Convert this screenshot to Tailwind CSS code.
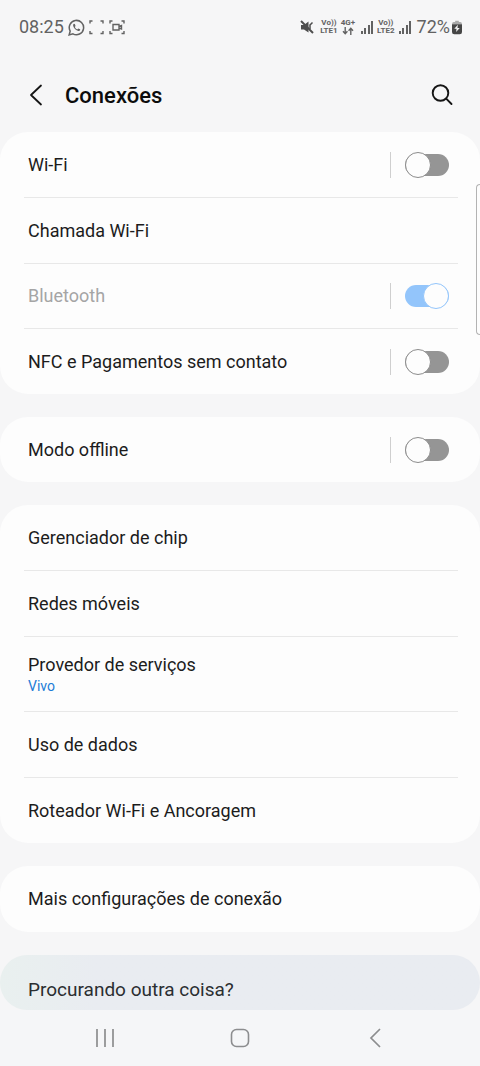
<!DOCTYPE html>
<html lang="pt-BR">
<head>
<meta charset="utf-8">
<meta name="viewport" content="width=device-width, initial-scale=1">
<title>Conexões</title>
<script src="https://cdn.jsdelivr.net/npm/@tailwindcss/browser@4"></script>
</head>
<body class="relative flex h-screen flex-col overflow-hidden bg-[#f6f6f7] font-[Roboto,sans-serif] text-lg text-[#1c1c1c]">

<!-- Status bar -->
<div class="flex h-[54px] shrink-0 items-center justify-between pr-[18px] pl-[19px] text-[#626262]">
  <div class="flex items-center gap-1">
    <span>08:25</span>
    <svg class="size-[17px]" viewBox="0 0 18 18" fill="none" stroke="currentColor" stroke-width="1.6" aria-label="WhatsApp"><path d="M1.2 16.8 2.3 12.8A7.6 7.6 0 1 1 5.2 15.7Z"/><path d="M6.3 5.1c-.9.5-1.1 1.4-.7 2.5.8 2.2 2.4 3.9 4.7 4.8 1.2.5 2.1.2 2.6-.8l-.1-.7-1.9-.9-1.2 1c-1.1-.5-2-1.4-2.5-2.5l.8-1-.8-2.1Z" fill="currentColor" stroke="none"/></svg>
    <svg class="h-4 w-[15px]" viewBox="0 0 15 16" fill="none" stroke="currentColor" stroke-width="1.4" aria-hidden="true"><path d="M1 4.5V2h2.5M11.5 2H14v2.5M14 12v2.500h-2.500M3.500 14.500H1V12"/></svg>
    <svg class="ml-px h-4 w-4" viewBox="0 0 16 16" fill="none" stroke="currentColor" stroke-width="1.4" aria-hidden="true"><path d="M1 4.500V2h2.500M12.500 2H15v2.500M15 12v2.500h-2.500M3.500 14.500H1V12M4 5.500h6v5.500H4zM10 7.500l2.500-1v3.500L10 9"/></svg>
  </div>
  <div class="flex items-center gap-[3px]">
    <svg class="mr-[3px] h-[14px] w-[14px]" viewBox="0 0 14 14" aria-label="Som desativado"><path d="M1 5h3l4.500-3.500v11L4 9.500H1Z" fill="#4d4d4d"/><path d="M10 5v4M12.500 2.500 9.500 5.500" stroke="#4d4d4d" stroke-width="1.500"/><path d="m1 1 12 12" stroke="#4d4d4d" stroke-width="2"/></svg>
    <div class="flex flex-col items-center text-[8px] leading-[8px] font-bold"><span>Vo))</span><span>LTE1</span></div>
    <div class="flex flex-col items-center text-[8px] leading-[8px] font-bold"><span>4G+</span>
      <svg class="h-2 w-3" viewBox="0 0 12 8" fill="none" stroke="currentColor" stroke-width="1.400" aria-hidden="true"><path d="M3.200 0v6.500M1 4.300l2.200 2.400 2.200-2.400M8.800 8V1.500M6.600 3.700l2.200-2.400L11 3.700"/></svg>
    </div>
    <svg class="ml-[2px] h-[14px] w-[14px]" viewBox="0 0 14 14" fill="#626262" aria-label="Sinal do chip 1"><path d="M1 11h2v3H1zM4 8h2v6H4zM8 5h2v9H8zM11 1h2v13h-2z"/></svg>
    <div class="flex flex-col items-center text-[8px] leading-[8px] font-bold"><span>Vo))</span><span>LTE2</span></div>
    <svg class="h-[14px] w-[14px]" viewBox="0 0 14 14" fill="#626262" aria-label="Sinal do chip 2"><path d="M1 11h2v3H1zM4 8h2v6H4zM8 5h2v9H8zM11 1h2v13h-2z"/></svg>
    <span class="ml-[2px]">72%</span>
    <svg class="-ml-px h-[15px] w-[10px]" viewBox="0 0 11 15" aria-label="Bateria"><path d="M3.500 0h4v1.500H9Q11 1.500 11 4H0Q0 1.500 2 1.500h1.500Z" fill="#aaa"/><path d="M0 4h11v8.500Q11 15 8.500 15h-6Q0 15 0 12.500Z" fill="#464646"/><path d="m6.500 4.500-4 4.500h2.500l-.5 3.500 4-4.500H6Z" fill="#f6f6f7"/></svg>
  </div>
</div>

<!-- Title bar -->
<header class="flex h-[78px] shrink-0 items-center px-6 pt-1">
  <button type="button" aria-label="Voltar" class="flex size-6 items-center justify-center">
    <svg class="size-6" viewBox="0 0 24 24" fill="none" stroke="#151515" stroke-width="1.800" stroke-linecap="round" stroke-linejoin="round"><path d="M17 2.500 7 12l10 9.500"/></svg>
  </button>
  <h1 class="ml-[17px] grow pt-[2px] text-[22px] font-medium text-[#0c0c0c]">Conexões</h1>
  <button type="button" aria-label="Pesquisar" class="flex size-7 items-center justify-center">
    <svg class="size-7" viewBox="0 0 28 28" fill="none" stroke="#151515" stroke-width="1.900" stroke-linecap="round"><circle cx="12.500" cy="12" r="7.800"/><path d="m18.200 17.700 5.300 5.300"/></svg>
  </button>
</header>

<main class="flex min-h-0 grow flex-col gap-[23px] overflow-hidden">
  <section class="shrink-0 rounded-[28px] bg-[#fdfdfd] pr-[22px] pl-6">
    <div class="flex h-[66px] items-center border-b border-[#e8e8e8] px-1">
      <label for="wifi" class="grow">Wi-Fi</label>
      <div class="mr-[5px] flex items-center border-l border-[#cfcfcf] pl-[14px]"><input id="wifi" type="checkbox" role="switch" class="relative h-[26px] w-11 appearance-none before:absolute before:inset-x-0 before:inset-y-[2px] before:rounded-full before:bg-[#959595] after:absolute after:top-0 after:left-0 after:size-[26px] after:rounded-full after:border after:border-[#8c8c8c] after:bg-[#fdfdfd] checked:before:bg-[#93c5fb] checked:after:left-[18px] checked:after:border-[#93c5fb]"></div>
    </div>
    <a href="#chamada" class="flex h-[66px] items-center border-b border-[#e8e8e8] px-1">Chamada Wi-Fi</a>
    <div class="flex h-[65px] items-center border-b border-[#e8e8e8] px-1">
      <label for="bluetooth" class="grow text-[#a5a5a5]">Bluetooth</label>
      <div class="mr-[5px] flex items-center border-l border-[#cfcfcf] pl-[14px]"><input id="bluetooth" type="checkbox" role="switch" checked disabled class="relative h-[26px] w-11 appearance-none before:absolute before:inset-x-0 before:inset-y-[2px] before:rounded-full before:bg-[#959595] after:absolute after:top-0 after:left-0 after:size-[26px] after:rounded-full after:border after:border-[#8c8c8c] after:bg-[#fdfdfd] checked:before:bg-[#93c5fb] checked:after:left-[18px] checked:after:border-[#93c5fb]"></div>
    </div>
    <div class="flex h-[65px] items-center px-1">
      <label for="nfc" class="grow">NFC e Pagamentos sem contato</label>
      <div class="mr-[5px] flex items-center border-l border-[#cfcfcf] pl-[14px]"><input id="nfc" type="checkbox" role="switch" class="relative h-[26px] w-11 appearance-none before:absolute before:inset-x-0 before:inset-y-[2px] before:rounded-full before:bg-[#959595] after:absolute after:top-0 after:left-0 after:size-[26px] after:rounded-full after:border after:border-[#8c8c8c] after:bg-[#fdfdfd] checked:before:bg-[#93c5fb] checked:after:left-[18px] checked:after:border-[#93c5fb]"></div>
    </div>
  </section>

  <section class="shrink-0 rounded-[28px] bg-[#fdfdfd] pr-[22px] pl-6">
    <div class="flex h-[65px] items-center px-1">
      <label for="offline" class="grow">Modo offline</label>
      <div class="mr-[5px] flex items-center border-l border-[#cfcfcf] pl-[14px]"><input id="offline" type="checkbox" role="switch" class="relative h-[26px] w-11 appearance-none before:absolute before:inset-x-0 before:inset-y-[2px] before:rounded-full before:bg-[#959595] after:absolute after:top-0 after:left-0 after:size-[26px] after:rounded-full after:border after:border-[#8c8c8c] after:bg-[#fdfdfd] checked:before:bg-[#93c5fb] checked:after:left-[18px] checked:after:border-[#93c5fb]"></div>
    </div>
  </section>

  <nav class="shrink-0 rounded-[28px] bg-[#fdfdfd] pr-[22px] pl-6" aria-label="Redes">
    <a href="#chip" class="flex h-[66px] items-center border-b border-[#e8e8e8] px-1">Gerenciador de chip</a>
    <a href="#redes" class="flex h-[66px] items-center border-b border-[#e8e8e8] px-1">Redes móveis</a>
    <a href="#provedor" class="flex h-[75px] flex-col justify-center border-b border-[#e8e8e8] px-1"><span class="leading-6">Provedor de serviços</span><span class="text-sm leading-[18px] text-[#1c7cd6]">Vivo</span></a>
    <a href="#dados" class="flex h-[66px] items-center border-b border-[#e8e8e8] px-1">Uso de dados</a>
    <a href="#roteador" class="flex h-[65px] items-center px-1">Roteador Wi-Fi e Ancoragem</a>
  </nav>

  <nav class="shrink-0 rounded-[28px] bg-[#fdfdfd] pr-[22px] pl-6" aria-label="Mais">
    <a href="#mais" class="flex h-[66px] items-center px-1">Mais configurações de conexão</a>
  </nav>

  <section class="flex grow items-end rounded-[28px] bg-[#e9ecf0] bg-linear-to-r from-[#e9f0ef] to-[#e9ecf1] to-20% px-7 pb-[5px]">
    <h2 class="text-[19px] text-[#2b2e31]">Procurando outra coisa?</h2>
  </section>
</main>

<!-- System navigation -->
<nav class="grid h-14 shrink-0 grid-cols-3 items-center bg-[#f5f6f8] px-[38px] text-[#8c8d8f]" aria-label="Sistema">
  <button type="button" aria-label="Recentes" class="flex justify-center"><svg class="size-5" viewBox="0 0 20 20" fill="none" stroke="currentColor" stroke-width="1.700"><path d="M2 1v18M10 1v18M18 1v18"/></svg></button>
  <button type="button" aria-label="Início" class="flex justify-center"><svg class="size-5" viewBox="0 0 20 20" fill="none" stroke="currentColor" stroke-width="1.600"><rect x="1.500" y="1.500" width="17" height="17" rx="5"/></svg></button>
  <button type="button" aria-label="Voltar" class="flex justify-center"><svg class="size-5" viewBox="0 0 20 20" fill="none" stroke="currentColor" stroke-width="1.700"><path d="m15 1-9 9 9 9"/></svg></button>
</nav>

<!-- Edge panel handle -->
<div class="absolute top-[184px] right-0 h-[151px] w-1 rounded-l-md border border-r-0 border-[#b3b3b3] bg-[#fdfdfd]"></div>
</body>
</html>
